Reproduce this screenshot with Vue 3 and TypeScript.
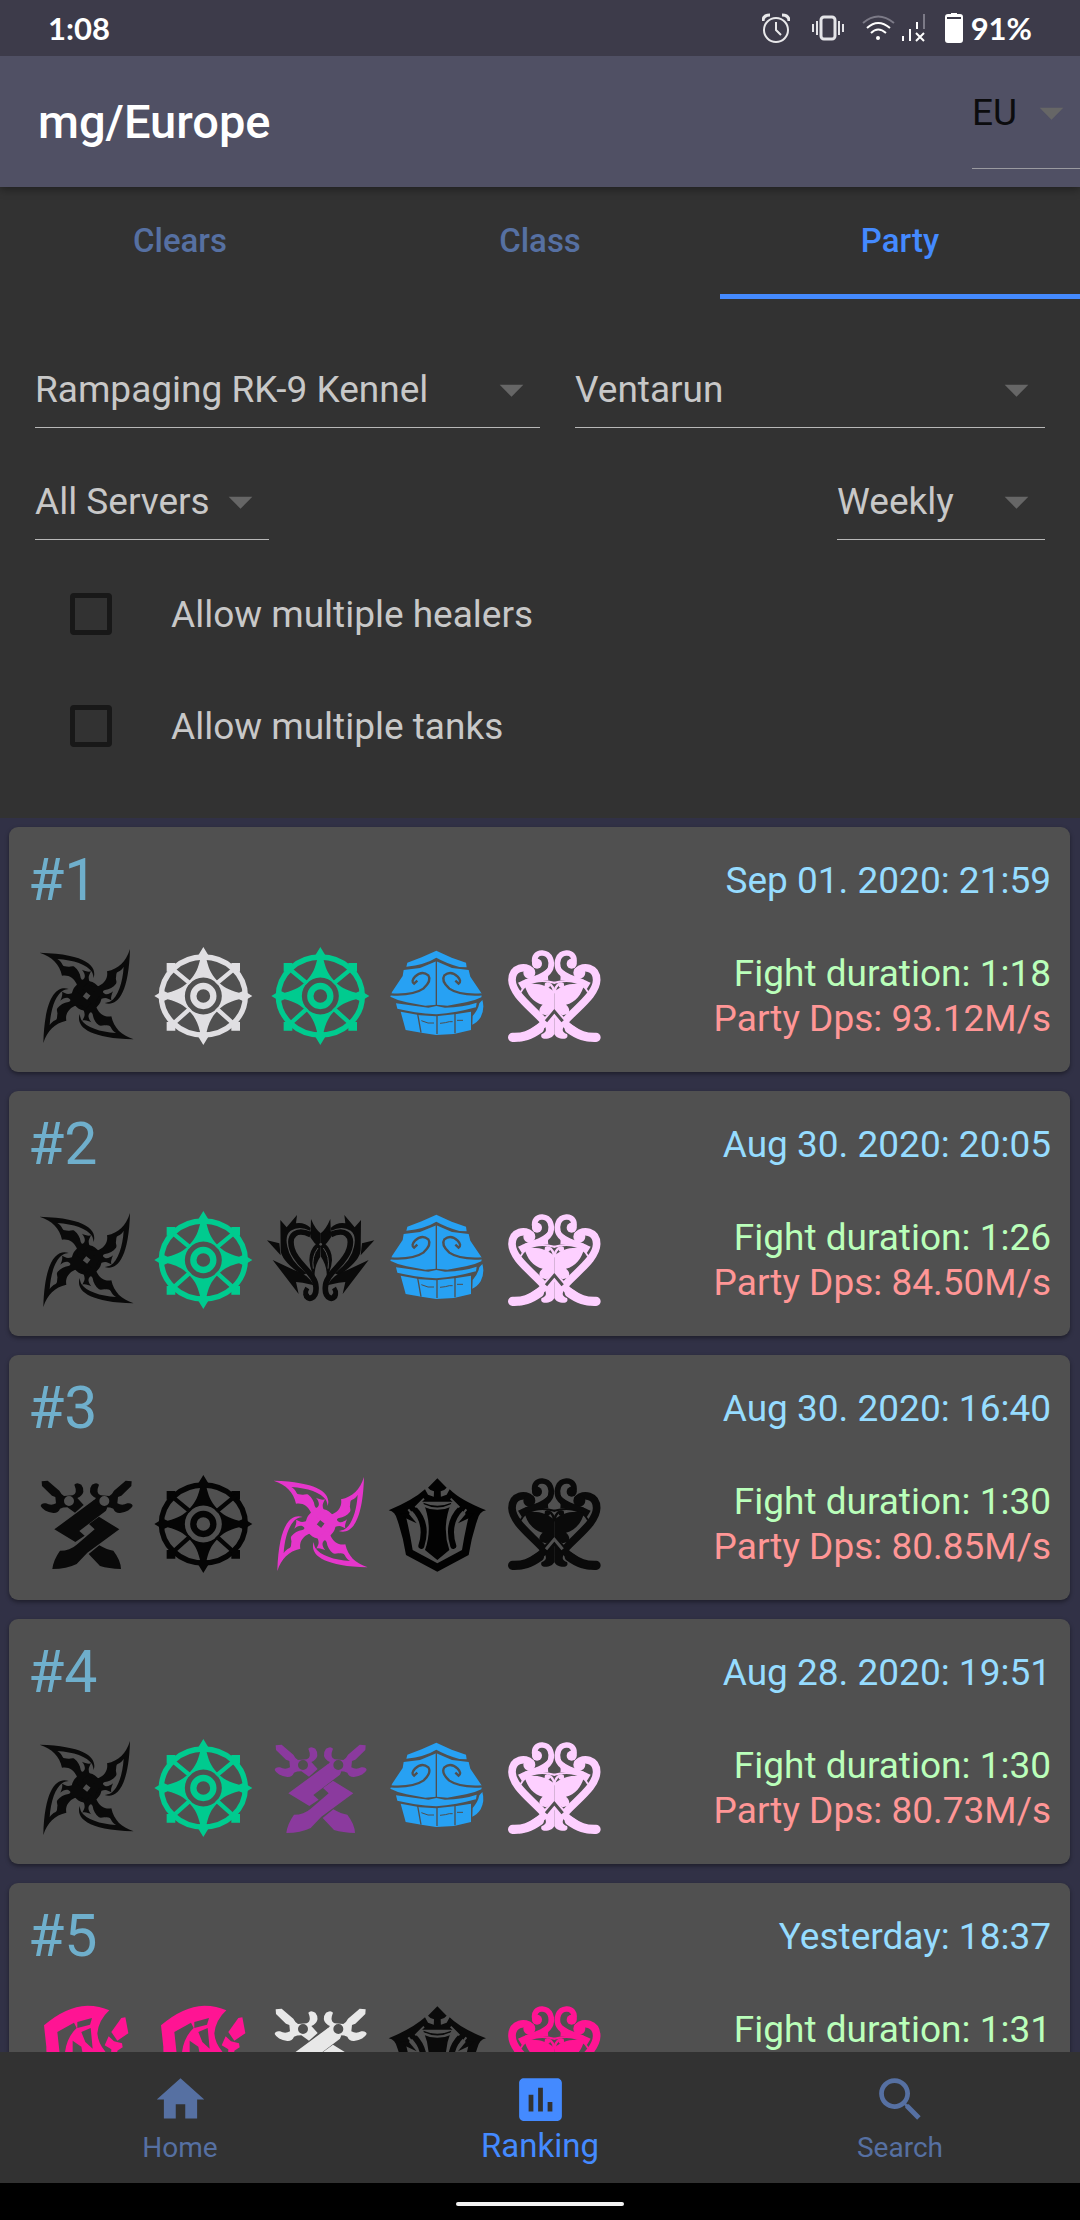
<script setup lang="ts">
import { ref } from 'vue'

type ClassIcon = 'ninja' | 'wheel' | 'mask' | 'mystic' | 'reaper' | 'warrior' | 'lancer' | 'brawler'

interface Member {
  icon: ClassIcon
  color: string
}

interface Party {
  rank: number
  date: string
  duration: string
  dps?: string
  members: Member[]
}

const black = '#0a0a0a'
const green = '#00cb8f'
const white = '#e0dfe2'
const blue = '#27a1f3'
const rose = '#fdd0ff'
const hotPink = '#ff1493'

const region = ref('EU')
const dungeon = ref('Rampaging RK-9 Kennel')
const boss = ref('Ventarun')
const server = ref('All Servers')
const period = ref('Weekly')
const multiHealers = ref(false)
const multiTanks = ref(false)

const tabs = ['Clears', 'Class', 'Party']
const activeTab = ref('Party')

const parties: Party[] = [
  {
    rank: 1, date: 'Sep 01. 2020: 21:59', duration: '1:18', dps: '93.12M/s',
    members: [
      { icon: 'ninja', color: black }, { icon: 'wheel', color: white }, { icon: 'wheel', color: green },
      { icon: 'mask', color: blue }, { icon: 'mystic', color: rose },
    ],
  },
  {
    rank: 2, date: 'Aug 30. 2020: 20:05', duration: '1:26', dps: '84.50M/s',
    members: [
      { icon: 'ninja', color: black }, { icon: 'wheel', color: green }, { icon: 'reaper', color: black },
      { icon: 'mask', color: blue }, { icon: 'mystic', color: rose },
    ],
  },
  {
    rank: 3, date: 'Aug 30. 2020: 16:40', duration: '1:30', dps: '80.85M/s',
    members: [
      { icon: 'warrior', color: black }, { icon: 'wheel', color: '#050505' }, { icon: 'ninja', color: '#e536cb' },
      { icon: 'lancer', color: '#020202' }, { icon: 'mystic', color: black },
    ],
  },
  {
    rank: 4, date: 'Aug 28. 2020: 19:51', duration: '1:30', dps: '80.73M/s',
    members: [
      { icon: 'ninja', color: black }, { icon: 'wheel', color: green }, { icon: 'warrior', color: '#8b3a9e' },
      { icon: 'mask', color: blue }, { icon: 'mystic', color: rose },
    ],
  },
  {
    rank: 5, date: 'Yesterday: 18:37', duration: '1:31',
    members: [
      { icon: 'brawler', color: hotPink }, { icon: 'brawler', color: hotPink }, { icon: 'warrior', color: '#e8e8e8' },
      { icon: 'lancer', color: black }, { icon: 'mystic', color: hotPink },
    ],
  },
]

const navItems = [
  { label: 'Home', path: 'M10 20v-6h4v6h5v-8h3L12 3 2 12h3v8z' },
  { label: 'Ranking', path: 'M19 3H5c-1.1 0-2 .9-2 2v14c0 1.1.9 2 2 2h14c1.1 0 2-.9 2-2V5c0-1.1-.9-2-2-2zM9 17H7v-7h2v7zm4 0h-2V7h2v10zm4 0h-2v-4h2v4z' },
  { label: 'Search', path: 'M15.5 14h-.79l-.28-.27C15.41 12.59 16 11.11 16 9.5 16 5.91 13.09 3 9.5 3S3 5.91 3 9.5 5.91 16 9.5 16c1.61 0 3.09-.59 4.23-1.57l.27.28v.79l5 4.99L20.49 19l-4.99-5zm-6 0C7.01 14 5 11.99 5 9.5S7.01 5 9.5 5 14 7.01 14 9.5 11.99 14 9.5 14z' },
]
const activeNav = ref('Ranking')
</script>

<template>
  <div class="app">
    <svg class="sprite" aria-hidden="true">
      <symbol id="ninja" viewBox="84 381 351 351">
        <circle cx="260" cy="558" r="32" fill="none" stroke="currentColor" stroke-width="26" />
        <g id="ninja-arm">
          <path fill="currentColor" d="M119,428 C157,440 178,462 186,497 C205,493 222,504 230,522 C236,538 230,550 222,556 L238,572 L268,535 L276,524 C266,516 264,500 268,494 L273,484 C264,487 254,482 246,479 C254,488 258,500 251,507 C248,511 244,509 242,503 C240,490 234,478 223,470 C216,466 210,472 205,470 C198,469 190,470 188,465 C184,456 178,450 172,447 C220,450 262,464 276,486 C279,492 280,498 281,504 C292,470 262,432 119,428Z" />
        </g>
        <use href="#ninja-arm" transform="rotate(90 260 558)" />
        <use href="#ninja-arm" transform="rotate(180 260 558)" />
        <use href="#ninja-arm" transform="rotate(270 260 558)" />
      </symbol>

      <symbol id="wheel" viewBox="-175 -177 351 351">
        <ellipse rx="126" ry="117" fill="none" stroke="currentColor" stroke-width="16" />
        <circle r="30" fill="none" stroke="currentColor" stroke-width="19" />
        <g fill="currentColor">
          <path id="wheel-point" d="M0,-147 L16,-121 L10,-107 C18,-75 28,-58 46,-42 L42,-36 A55,55 0 0 0 -42,-36 L-46,-42 C-28,-58 -18,-75 -10,-107 L-16,-121Z" />
          <use href="#wheel-point" transform="rotate(90)" />
          <use href="#wheel-point" transform="rotate(180)" />
          <use href="#wheel-point" transform="rotate(270)" />
          <path d="M-110,-99h26v26h-26z M84,-99h26v26h-26z M-110,78h26v26h-26z M84,78h26v26h-26z" />
        </g>
        <path d="M-98,-86L-40,-38 M98,-86L40,-38 M-98,90L-40,38 M98,90L40,38" stroke="currentColor" stroke-width="13" />
      </symbol>

      <symbol id="mask" viewBox="57 381 351 351">
        <g fill="currentColor">
          <path d="M139,470 L142,458 L185,442 L229,422 L275,443 L318,458 L320,472 L298,471 Q255,458 229,443 Q195,464 139,470Z" />
          <path d="M229,454 L276,474 L326,480 L331,500 L366,552 L364,562 Q345,572 318,577 L262,587 L229,584 L196,587 L140,577 Q112,571 91,560 L96,546 L128,498 L131,480 L180,474Z" />
          <path d="M108,580 Q165,588 205,593 L229,588 L255,593 Q310,592 350,578 L348,592 Q290,608 229,613 Q160,608 112,596Z" />
          <path d="M122,605 L180,616 L228,619 L290,612 L333,605 L333,660 L282,672 L228,675 L184,668 L137,660Z" />
          <path d="M367,570 Q375,596 362,622 Q350,640 337,644 L338,618 Q354,600 358,580Z" />
        </g>
        <g class="cut" fill="none" stroke-width="4">
          <path d="M229,452V586 M173,612L183,668 M231,616V672 M285,608V670" />
          <path d="M184,632l20,7h18 M240,640l16,-2 12,-3 10,0 M291,631h18" stroke-width="3" />
          <path d="M92,553 Q160,557 190,536 Q216,512 205,496 Q186,480 165,500 Q152,514 162,521 L172,512" stroke-width="7" />
          <path d="M366,553 Q298,557 268,536 Q242,512 253,496 Q272,480 293,500 Q306,514 296,521 L286,512" stroke-width="7" />
        </g>
      </symbol>

      <symbol id="mystic" viewBox="408 381 351 351">
        <g id="mystic-half">
          <g fill="none" stroke="currentColor" stroke-linecap="round">
            <path stroke-width="17" d="M525,460 C520,440 532,428 547,429 C572,431 577,456 572,474 C566,492 540,506 500,516" />
            <path stroke-width="23" d="M512,482 C498,466 456,470 456,510 C457,552 512,590 554,636" />
            <path stroke-width="6" d="M483,545 C500,512 545,508 583,518" />
            <path stroke-width="28" d="M458,682 C490,683 510,676 538,656" />
            <path stroke-width="23" d="M480,682 C520,676 552,642 580,610" />
            <path stroke-width="7" d="M583,546 C580,526 566,516 558,522" />
          </g>
          <g fill="currentColor">
            <circle cx="531" cy="461" r="15" />
            <circle cx="508" cy="488" r="18" />
            <circle cx="562" cy="526" r="8" />
            <path d="M577,455 C565,490 510,500 474,518 L486,538 C505,514 540,511 565,511 C561,490 572,476 580,468Z" />
            <path d="M583,545 C562,526 530,516 494,524 C500,552 520,578 548,584 C538,592 534,604 544,612 L558,616 L583,602Z" />
            <path d="M583,620 L554,648 C564,664 552,670 545,672 C540,682 548,688 560,686 C574,685 580,678 583,672Z" />
          </g>
        </g>
        <use href="#mystic-half" transform="translate(1166 0) scale(-1 1)" />
        <path class="cut" fill="none" stroke-width="9" d="M558,634 L583,604 L608,634" />
      </symbol>

      <symbol id="reaper" viewBox="38 33 351 351">
        <g id="reaper-half">
          <g fill="currentColor">
            <path d="M185,87 Q198,118 214,130 L214,172 L196,160 L183,142Z" />
            <path d="M93,90 L112,112 L143,75 L140,100 Q165,96 184,114 L182,122 Q150,106 124,122 Q106,136 114,170 Q122,212 172,250 L160,256 Q96,214 94,180Z" />
            <path d="M53,151 L90,160 L94,196Z" />
            <path d="M70,210 L134,240 Q176,252 194,286 L160,278 L140,276 L148,312Z" />
            <path d="M202,160 Q180,180 180,210 Q182,240 196,262 Q194,228 213,200 L214,166Z" />
          </g>
          <g fill="none" stroke="currentColor">
            <path stroke-width="17" d="M184,134 C142,114 116,134 128,176 C140,222 200,250 200,292 C202,328 172,334 170,312" />
            <path stroke-width="14" d="M174,294Q162,312 178,324" />
          </g>
        </g>
        <use href="#reaper-half" transform="translate(428 0) scale(-1 1)" />
        <circle cx="214" cy="163" r="4" class="cut-fill" />
        <path class="cut" fill="none" stroke-width="3" d="M206,174Q186,200 192,236 M222,174Q242,200 236,236" />
      </symbol>

      <symbol id="warrior" viewBox="24 45 351 351">
        <g fill="currentColor" fill-rule="evenodd">
          <path id="warrior-hilt" d="M65,94 L83,92 L118,122 Q124,134 132,138 L158,136 Q174,130 163,104 Q170,95 184,104 Q192,114 190,126 Q186,138 172,144 L191,165 L165,188 L142,172 Q128,172 120,176 Q114,190 100,189 Q70,184 62,168 Q64,158 78,160 Q94,168 108,160 L106,141 L96,137 L66,108Z M162,153a15,15 0 1 0 -30,0a15,15 0 1 0 30,0z" />
          <use href="#warrior-hilt" transform="translate(400 0) scale(-1 1)" />
          <path d="M222,150 L234,166 L262,172 L258,182 L178,243 L194,257 L166,276 L103,238Z" />
          <path d="M237,200 L298,238 L202,308 L170,342 Q140,357 97,357 Q100,330 120,302 Q150,302 170,284 L224,238 L207,222Z" />
          <path d="M238,286 Q262,300 280,302 Q302,330 303,357 Q266,356 240,348 L206,312Z" />
        </g>
      </symbol>

      <symbol id="lancer" viewBox="57 45 351 351">
        <path fill="currentColor" d="M195,118 Q160,150 86,181 Q106,185 112,210 Q130,262 138,315 L232,365 L326,315 Q334,262 352,210 Q358,185 378,181 Q300,150 269,118 L260,134 L243,140 H221 L204,134Z" />
        <path class="cut-fill" d="M138,200 Q150,250 158,300 L232,340 L306,300 Q314,250 326,200 L280,155 L184,155Z" />
        <path fill="currentColor" d="M190,158 Q232,176 274,158 Q244,230 268,300 L232,330 L195,300 Q220,230 190,158Z" />
        <g id="lancer-side" fill="none" stroke="currentColor">
          <path stroke-width="18" stroke-linecap="round" d="M160,174 Q206,220 184,288" />
          <path fill="currentColor" stroke="none" d="M120,190 L145,190 L170,220 L136,204Z" />
          <path class="cut" stroke-width="6" d="M145,178 L166,206 M166,172 L192,146" />
        </g>
        <use href="#lancer-side" transform="translate(464 0) scale(-1 1)" />
        <path class="cut" fill="none" stroke-width="7" d="M190,166 Q232,186 274,166" />
        <path fill="currentColor" d="M232,85 L260,113 Q252,123 242,124 L243,150 H221 L222,124 Q212,123 204,113Z" />
      </symbol>

      <symbol id="brawler" viewBox="84 399 351 351">
        <g fill="currentColor">
          <path d="M132,496 Q196,440 262,437 Q300,437 328,451 Q296,480 292,520 Q294,556 330,590 L320,680 L160,680 Q138,600 139,560Z" />
          <path d="M364,474 L376,472 L385,520 L352,542 L334,516Z" />
          <path d="M326,529 L342,544 L366,550 L368,562 L352,572 L350,640 L330,640 L334,568 L314,556Z" />
        </g>
        <g class="cut-fill">
          <path d="M172,516 L222,488 L230,504 Q196,536 194,590 L180,590Z" />
          <path d="M232,486 L276,474 L270,494 L232,504Z" />
          <path d="M218,542 L244,560 L250,590 L218,590Z M244,516 L272,504 L278,566 L256,546Z" />
        </g>
      </symbol>
    </svg>

    <header>
      <div class="status">
        <span class="clock">1:08</span>
        <div class="status-icons">
          <svg class="alarm" width="28" height="30" viewBox="0 0 28 30" fill="none" stroke="#e8e8ea">
            <circle cx="14" cy="17" r="12" stroke-width="2" />
            <path d="M14 9v8l5 5" stroke-width="2" />
            <path d="M1 8Q1 2 8 2M27 8Q27 2 20 2" stroke-width="3" />
          </svg>
          <svg class="vibrate" width="32" height="26" viewBox="0 0 32 26" fill="none" stroke="#e4e4e8" stroke-width="2">
            <rect x="9" y="2" width="14" height="22" rx="3" stroke-width="3" />
            <path d="M1 9v8M5 6v14M27 6v14M31 9v8" />
          </svg>
          <svg class="wifi" width="33" height="27" viewBox="0 0 33 27" fill="none" stroke="#fff" stroke-width="2">
            <path d="M1 8Q16 -5 32 8" stroke="#7c7a87" />
            <path d="M5 13Q16 3 28 13M9 18Q16 11 24 18" />
            <circle cx="16" cy="23" r="2" fill="#fff" stroke="none" />
          </svg>
          <svg class="signal" width="23" height="28" viewBox="0 0 23 28" fill="none" stroke="#fff" stroke-width="2">
            <path d="M22 0v15" stroke="#7c7a87" />
            <path d="M1 22v5M8 15v12M15 8v7M14 19l8 8M22 19l-8 8" />
          </svg>
          <svg class="battery" width="18" height="30" viewBox="0 0 18 30">
            <path fill="#fff" d="M6 0h6v1h3q3 0 3 3v23q0 3-3 3H3q-3 0-3-3V4q0-3 3-3h3z" />
            <path stroke="#3d3b4a" stroke-width="2" d="M2 5h14" />
          </svg>
          <span class="percent">91%</span>
        </div>
      </div>
      <div class="bar">
        <h1>mg/Europe</h1>
        <label class="pick region">
          <select v-model="region" aria-label="Region">
            <option>EU</option>
            <option>NA</option>
          </select>
          <svg class="arrow" viewBox="0 0 24 24"><path d="M7 10l5 5 5-5z" /></svg>
        </label>
      </div>
    </header>

    <nav class="tabs" aria-label="Ranking type">
      <button v-for="t in tabs" :key="t" type="button" :class="{ active: t === activeTab }" @click="activeTab = t">{{ t }}</button>
    </nav>

    <section class="filters">
      <div class="row">
        <label class="pick dungeon">
          <select v-model="dungeon" aria-label="Dungeon"><option>Rampaging RK-9 Kennel</option></select>
          <svg class="arrow" viewBox="0 0 24 24"><path d="M7 10l5 5 5-5z" /></svg>
        </label>
        <label class="pick boss">
          <select v-model="boss" aria-label="Boss"><option>Ventarun</option></select>
          <svg class="arrow" viewBox="0 0 24 24"><path d="M7 10l5 5 5-5z" /></svg>
        </label>
      </div>
      <div class="row">
        <label class="pick server">
          <select v-model="server" aria-label="Server"><option>All Servers</option></select>
          <svg class="arrow" viewBox="0 0 24 24"><path d="M7 10l5 5 5-5z" /></svg>
        </label>
        <label class="pick period">
          <select v-model="period" aria-label="Period"><option>Weekly</option></select>
          <svg class="arrow" viewBox="0 0 24 24"><path d="M7 10l5 5 5-5z" /></svg>
        </label>
      </div>
      <label class="check"><input v-model="multiHealers" type="checkbox">Allow multiple healers</label>
      <label class="check"><input v-model="multiTanks" type="checkbox">Allow multiple tanks</label>
    </section>

    <main class="list">
      <article v-for="p in parties" :key="p.rank" class="card">
        <div class="head">
          <span class="rank">#{{ p.rank }}</span>
          <span class="date">{{ p.date }}</span>
        </div>
        <div class="body">
          <div class="members">
            <svg v-for="(m, i) in p.members" :key="i" class="member" :style="{ color: m.color }">
              <use :href="'#' + m.icon" />
            </svg>
          </div>
          <div class="stats">
            <span class="duration">Fight duration: {{ p.duration }}</span>
            <span v-if="p.dps" class="dps">Party Dps: {{ p.dps }}</span>
          </div>
        </div>
      </article>
    </main>

    <nav class="bottom" aria-label="Main">
      <button v-for="n in navItems" :key="n.label" type="button" :class="{ active: n.label === activeNav }" @click="activeNav = n.label">
        <svg viewBox="0 0 24 24"><path :d="n.path" fill="currentColor" /></svg>
        <span>{{ n.label }}</span>
      </button>
    </nav>
    <div class="gesture"><span class="pill"></span></div>
  </div>
</template>

<style>
body {
  margin: 0;
  background: #000;
}
</style>

<style scoped>
.app {
  --card: #505050;
  --accent: #448aff;
  --muted: #5670a2;
  display: flex;
  flex-direction: column;
  height: 100vh;
  overflow: hidden;
  background: #313146;
  font-family: Roboto, "Liberation Sans", sans-serif;
  font-size: 37px;
}
.app * {
  box-sizing: border-box;
}
.sprite {
  position: absolute;
  width: 0;
  height: 0;
}
.cut {
  stroke: var(--card);
}
.cut-fill {
  fill: var(--card);
}
button {
  border: 0;
  padding: 0;
  background: none;
  font-family: inherit;
  color: var(--muted);
}

header {
  position: relative;
  z-index: 1;
  flex: none;
  background: #505064;
  box-shadow: 0 2px 9px rgba(0, 0, 0, 0.4);
}
.status {
  display: flex;
  align-items: center;
  justify-content: space-between;
  height: 56px;
  padding: 0 48px;
  background: #3d3b4a;
  color: #fff;
  font-family: Lato, Roboto, sans-serif;
  font-size: 31px;
  font-weight: 700;
}
.status-icons {
  display: flex;
  align-items: center;
}
.alarm {
  margin-right: 22px;
}
.vibrate {
  margin-right: 18px;
}
.wifi {
  margin-right: 7px;
}
.signal {
  margin-right: 20px;
}
.battery {
  margin-right: 8px;
}
.bar {
  display: flex;
  justify-content: space-between;
  height: 131px;
  padding-left: 38px;
}
h1 {
  margin: 0;
  color: #fff;
  font-size: 47px;
  font-weight: 500;
  line-height: 132px;
}

.pick {
  position: relative;
  display: block;
}
.pick select {
  width: 100%;
  height: 76px;
  padding: 0 57px 0 0;
  border: 0;
  border-bottom: 1px solid #b8b8b8;
  border-radius: 0;
  background: none;
  appearance: none;
  outline: 0;
  color: #c8c8c8;
  font-family: inherit;
  font-size: 37px;
}
.pick .arrow {
  position: absolute;
  top: 9px;
  right: 0;
  width: 57px;
  height: 57px;
  fill: #666;
  pointer-events: none;
}
.region {
  width: 108px;
}
.region select {
  height: 113px;
  border-color: #9a9aa0;
  color: #0c0c0e;
}
.region .arrow {
  top: 28px;
}

.tabs {
  display: flex;
  flex: none;
  height: 112px;
  background: #323232;
}
.tabs button {
  flex: 1;
  border-bottom: 5px solid transparent;
  font-size: 33px;
  font-weight: 500;
}
.tabs .active {
  border-bottom-color: var(--accent);
  color: var(--accent);
}

.filters {
  flex: none;
  padding: 35px 35px 36px;
  background: #323232;
  color: #c8c8c8;
}
.row {
  display: flex;
  align-items: center;
  justify-content: space-between;
  height: 112px;
}
.row .dungeon {
  width: 50%;
}
.row .boss {
  flex: 1;
  margin-left: 35px;
}
.server {
  width: 234px;
}
.period {
  width: 208px;
}
.check {
  display: flex;
  align-items: center;
  height: 112px;
  padding-left: 35px;
}
.check input {
  appearance: none;
  width: 42px;
  height: 42px;
  margin: 0 59px 0 0;
  border: 5px solid #181818;
  border-radius: 4px;
}
.check input:checked {
  background: var(--accent);
}

.list {
  display: flex;
  flex: 1;
  flex-direction: column;
  gap: 19px;
  min-height: 0;
  padding: 9px 10px 9px 9px;
  overflow-y: auto;
  scrollbar-width: none;
}
.card {
  display: flex;
  flex: none;
  flex-direction: column;
  gap: 23px;
  padding: 19px 19px 18px;
  border-radius: 9px;
  background: var(--card);
  box-shadow: 0 2px 4px rgba(0, 0, 0, 0.4);
}
.head,
.body {
  display: flex;
  align-items: center;
  justify-content: space-between;
}
.rank {
  color: #6fafcc;
  font-size: 59px;
  line-height: 68px;
}
.date {
  color: #96dcff;
}
.members {
  display: flex;
}
.member {
  width: 117px;
  height: 117px;
}
.stats {
  display: flex;
  flex-direction: column;
  align-items: flex-end;
  min-height: 90px;
  line-height: 45px;
}
.duration {
  color: #baffba;
}
.dps {
  color: #ff9696;
}

.bottom {
  display: flex;
  flex: none;
  height: 131px;
  background: #323232;
}
.bottom button {
  display: flex;
  flex: 1;
  flex-direction: column;
  align-items: center;
  padding-top: 19px;
  font-size: 28px;
  line-height: 40px;
}
.bottom svg {
  width: 57px;
  height: 57px;
}
.bottom .active {
  color: var(--accent);
  font-size: 33px;
  line-height: 36px;
}
.gesture {
  display: flex;
  flex: none;
  align-items: center;
  justify-content: center;
  height: 37px;
  background: #000;
}
.pill {
  width: 168px;
  height: 4px;
  margin-top: 4px;
  border-radius: 2px;
  background: #f2f2f2;
}
</style>
